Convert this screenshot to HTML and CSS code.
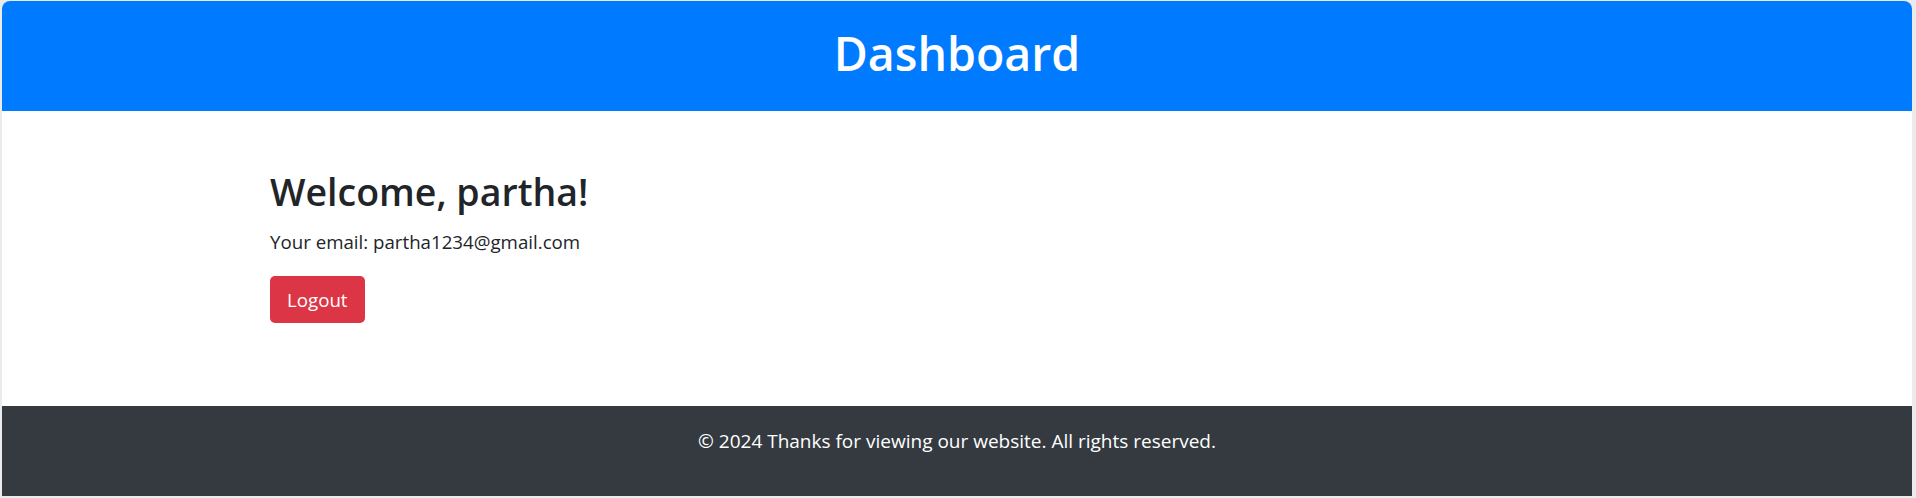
FILE: index.html
```html
<!DOCTYPE html>
<html lang="en">
<head>
<meta charset="utf-8">
<title>Dashboard</title>
<link rel="stylesheet" href="styles.css">
</head>
<body>
<div class="frame">
  <header class="topbar">
    <h1 class="topbar-title">Dashboard</h1>
  </header>
  <main class="content">
    <div class="container">
      <h2 class="welcome">Welcome, partha!</h2>
      <p class="email">Your email: partha1234@gmail.com</p>
      <button class="btn-logout" type="button">Logout</button>
    </div>
  </main>
  <footer class="footer">
    <p class="footer-text">© 2024 Thanks for viewing our website. All rights reserved.</p>
  </footer>
</div>
</body>
</html>
```

FILE: styles.css
```css
* { box-sizing: border-box; }
html, body { margin: 0; padding: 0; }
body {
  background: #ebebeb;
  font-family: "Segoe UI", "Open Sans", "Noto Sans", sans-serif;
  color: #212529;
  height: 498px;
  padding: 1px 4px 2px 2px;
}
.frame {
  height: 495px;
  display: flex;
  flex-direction: column;
  background: #fff;
  border-radius: 8px 8px 0 0;
  overflow: hidden;
}
.topbar {
  background: #007bff;
  height: 110px;
  padding: 22px 0 28px;
  text-align: center;
}
.topbar-title {
  margin: 0;
  color: #fff;
  font-size: 46.5px;
  font-weight: 600;
  line-height: 60px;
}
.content {
  flex: 1;
  padding-top: 58px;
}
.container {
  max-width: 1374px;
  margin: 0 auto;
}
.welcome {
  margin: 0 0 14px;
  font-size: 37.5px;
  font-weight: 600;
  line-height: 1.2;
}
.email {
  margin: 0 0 20px;
  font-size: 18.7px;
  line-height: 1.5;
}
.btn-logout {
  font-family: inherit;
  font-size: 18.7px;
  line-height: 1.5;
  color: #fff;
  background: #dc3545;
  border: 0;
  border-radius: 5px;
  padding: 9px 17px;
  height: 47px;
}
.footer {
  background: #343a40;
  height: 90px;
  padding-top: 20px;
  text-align: center;
}
.footer-text {
  margin: 0;
  color: #fff;
  font-size: 19px;
  line-height: 30px;
}
```
